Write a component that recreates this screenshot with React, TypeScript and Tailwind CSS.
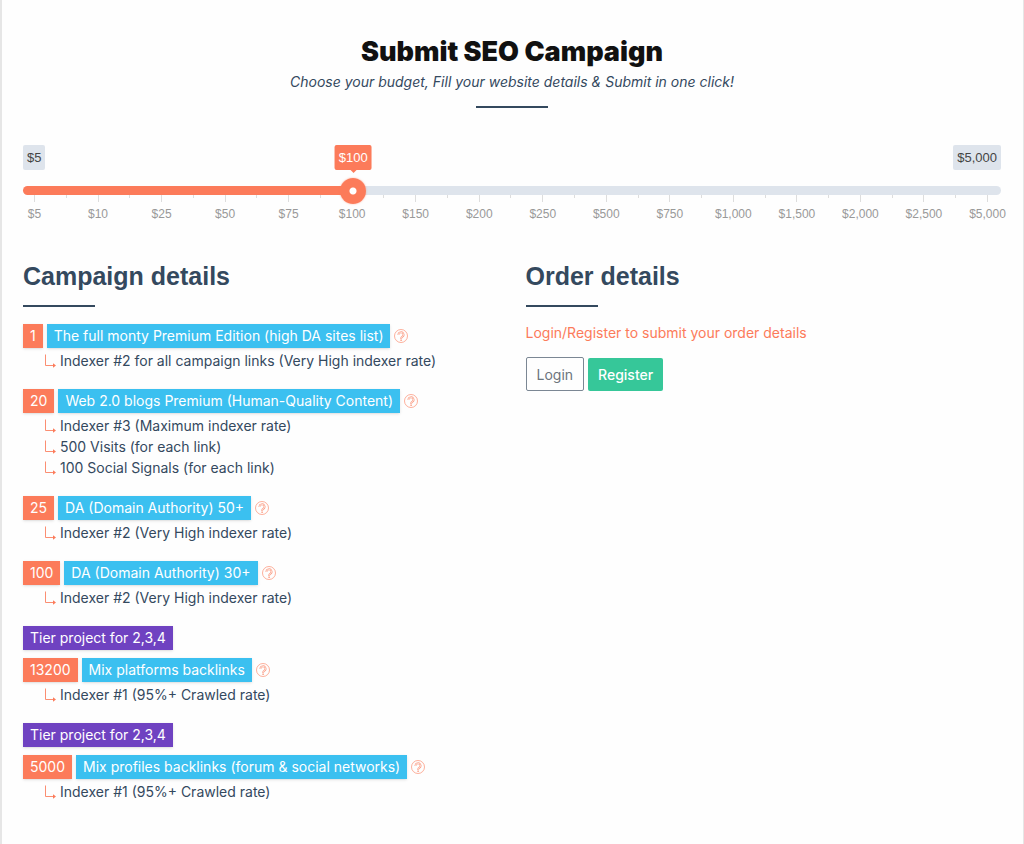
import { useState } from "react";

const BUDGETS = [5, 10, 25, 50, 75, 100, 150, 200, 250, 500, 750, 1000, 1500, 2000, 2500, 5000];
const LAST = BUDGETS.length - 1;
const THUMB = 26;

const money = (n: number) => "$" + n.toLocaleString("en-US");

type Item = { tier?: string; count: number; name: string; extras: string[] };

const ITEMS: Item[] = [
  {
    count: 1,
    name: "The full monty Premium Edition (high DA sites list)",
    extras: ["Indexer #2 for all campaign links (Very High indexer rate)"],
  },
  {
    count: 20,
    name: "Web 2.0 blogs Premium (Human-Quality Content)",
    extras: ["Indexer #3 (Maximum indexer rate)", "500 Visits (for each link)", "100 Social Signals (for each link)"],
  },
  { count: 25, name: "DA (Domain Authority) 50+", extras: ["Indexer #2 (Very High indexer rate)"] },
  { count: 100, name: "DA (Domain Authority) 30+", extras: ["Indexer #2 (Very High indexer rate)"] },
  {
    tier: "Tier project for 2,3,4",
    count: 13200,
    name: "Mix platforms backlinks",
    extras: ["Indexer #1 (95%+ Crawled rate)"],
  },
  {
    tier: "Tier project for 2,3,4",
    count: 5000,
    name: "Mix profiles backlinks (forum & social networks)",
    extras: ["Indexer #1 (95%+ Crawled rate)"],
  },
];

function HelpIcon() {
  const hook = "M4.5 5.9A2.5 2.4 0 1 1 8.2 7.8C7.4 8.3 7.1 8.6 7.1 9.6V10";
  return (
    <svg viewBox="0 0 14 14" className="size-[14px]" fill="none" aria-hidden="true">
      <circle cx="7" cy="7" r="6.5" stroke="#fb9b82" strokeWidth="0.8" />
      <path d={hook} stroke="#fb9b82" strokeWidth="1.9" />
      <path d={hook} stroke="#fefefe" strokeWidth="0.7" />
      <path d="M7.1 10.6V12" stroke="#fb9b82" strokeWidth="1.4" />
    </svg>
  );
}

function ElbowIcon() {
  return (
    <svg viewBox="0 0 12 14" className="h-[14px] w-[12px] shrink-0" aria-hidden="true">
      <path d="M1.5 0.5V11.5H10" fill="none" stroke="#fb8e72" strokeWidth="1" />
      <path d="M9 9.3L12 11.5L9 13.7Z" fill="#fc7b5a" />
    </svg>
  );
}

function BudgetSlider() {
  const [index, setIndex] = useState(5);
  const ratio = index / LAST;
  const pos = `calc(${ratio * 100}% + ${THUMB / 2 - ratio * THUMB}px)`;
  return (
    <div className="font-['Liberation_Sans',sans-serif]">
      <div className="relative flex h-[25px] items-stretch justify-between text-[13px] leading-[25px] text-[#444]">
        <span className="rounded-[2px] bg-[#dee4ec] px-1">{money(BUDGETS[0])}</span>
        <span className="rounded-[2px] bg-[#dee4ec] px-1">{money(BUDGETS[LAST])}</span>
        <output
          htmlFor="budget"
          className="absolute top-0 -translate-x-1/2 rounded-[2px] bg-[#fc7b5a] px-1 text-white after:absolute after:top-full after:left-1/2 after:-translate-x-1/2 after:border-x-3 after:border-t-3 after:border-x-transparent after:border-t-[#fc7b5a] after:content-['']"
          style={{ left: pos }}
        >
          {money(BUDGETS[index])}
        </output>
      </div>
      <input
        id="budget"
        type="range"
        aria-label="Budget"
        min={0}
        max={LAST}
        value={index}
        onChange={(e) => setIndex(Number(e.target.value))}
        className="relative z-10 mt-4 block h-[9px] w-full cursor-pointer appearance-none rounded-full [&::-webkit-slider-thumb]:size-[26px] [&::-webkit-slider-thumb]:appearance-none [&::-webkit-slider-thumb]:rounded-full [&::-webkit-slider-thumb]:bg-[radial-gradient(circle,#fff_3px,#fc7b5a_4px)] [&::-webkit-slider-thumb]:shadow-[0_0_2px_rgba(252,123,90,0.6)]"
        style={{ background: `linear-gradient(to right, #fc7b5a ${pos}, #dee4ec ${pos})` }}
      />
      <div className="flex h-[27px] justify-between pr-[13px] pl-[11px] text-[12px] text-[#999]">
        {Array.from({ length: LAST * 2 + 1 }, (_, i) => (
          <div key={i} className="flex w-px flex-col items-center">
            {i % 2 === 0 ? (
              <>
                <span className="h-[7px] w-px shrink-0 bg-[#ddd]" />
                <span className="mt-1 leading-4 whitespace-nowrap">{money(BUDGETS[i / 2])}</span>
              </>
            ) : (
              <span className="h-[3px] w-px bg-[#ddd]" />
            )}
          </div>
        ))}
      </div>
    </div>
  );
}

function SectionTitle({ children }: { children: string }) {
  return (
    <>
      <h2 className="font-['Liberation_Sans',sans-serif] text-[25px] leading-[30px] font-bold">{children}</h2>
      <div className="mt-[14px] h-[2px] w-[72px] bg-[#34495e]" />
    </>
  );
}

function Campaign({ item }: { item: Item }) {
  return (
    <li className="mb-[18px]">
      {item.tier && (
        <div className="mb-2 flex">
          <span className="bg-[#6f42c1] px-[7px] leading-6 text-white shadow-sm">{item.tier}</span>
        </div>
      )}
      <div className="flex items-center gap-1 leading-6 text-white">
        <span className="bg-[#fc7b5a] px-[7px] shadow-sm">{item.count}</span>
        <span className="bg-[#3bc0f0] px-[7px] whitespace-nowrap shadow-sm">{item.name}</span>
        <button type="button" aria-label={`About ${item.name}`}>
          <HelpIcon />
        </button>
      </div>
      <ul className="mt-[2px] pl-[21px]">
        {item.extras.map((extra) => (
          <li key={extra} className="flex items-center gap-1 leading-[21px] whitespace-nowrap">
            <ElbowIcon />
            {extra}
          </li>
        ))}
      </ul>
    </li>
  );
}

export default function App() {
  return (
    <main className="min-h-screen border-r border-l-2 border-[#e6e6e6] bg-[#fefefe] pt-9 pr-[22px] pb-6 pl-[21px] font-['Inter',sans-serif] text-[14px] text-[#34495e]">
      <header className="flex flex-col items-center text-center">
        <h1 className="text-[27px] leading-8 font-black text-[#111]">Submit SEO Campaign</h1>
        <p className="mt-1 leading-5 italic">Choose your budget, Fill your website details &amp; Submit in one click!</p>
        <div className="mt-[14px] h-[2px] w-[72px] bg-[#34495e]" />
      </header>

      <div className="mt-[37px]">
        <BudgetSlider />
      </div>

      <div className="mt-[39px] grid grid-cols-2 gap-[27px]">
        <section>
          <SectionTitle>Campaign details</SectionTitle>
          <ul className="mt-[17px]">
            {ITEMS.map((item) => (
              <Campaign key={item.name} item={item} />
            ))}
          </ul>
        </section>
        <section>
          <SectionTitle>Order details</SectionTitle>
          <p className="mt-[15px] leading-[21px] text-[#fc7b5a]">Login/Register to submit your order details</p>
          <div className="mt-[14px] flex items-center gap-1">
            <button type="button" className="h-[34px] rounded-[2px] border border-[#7b8794] px-[10px] text-[#6c757d]">
              Login
            </button>
            <button type="button" className="h-[33px] rounded-[2px] bg-[#36c799] px-[10px] font-medium text-white">
              Register
            </button>
          </div>
        </section>
      </div>
    </main>
  );
}
